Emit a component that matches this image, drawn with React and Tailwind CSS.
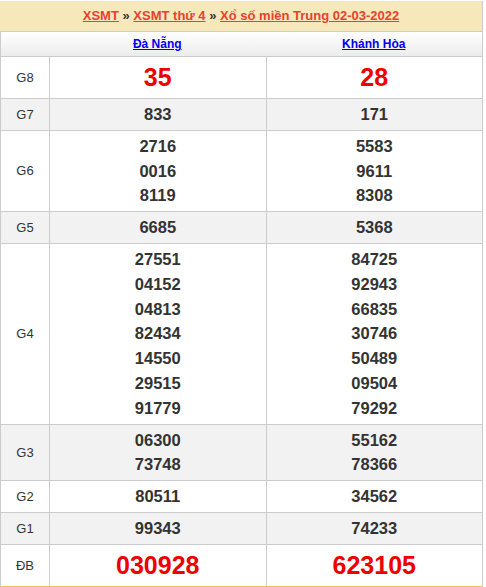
import React from "react";

const rows = [
    { label: "G8", a: ["35"], b: ["28"], big: true },
    { label: "G7", a: ["833"], b: ["171"], alt: true },
    { label: "G6", a: ["2716", "0016", "8119"], b: ["5583", "9611", "8308"] },
    { label: "G5", a: ["6685"], b: ["5368"], alt: true },
    {
        label: "G4",
        a: ["27551", "04152", "04813", "82434", "14550", "29515", "91779"],
        b: ["84725", "92943", "66835", "30746", "50489", "09504", "79292"],
    },
    { label: "G3", a: ["06300", "73748"], b: ["55162", "78366"], alt: true },
    { label: "G2", a: ["80511"], b: ["34562"] },
    { label: "G1", a: ["99343"], b: ["74233"], alt: true },
    { label: "ĐB", a: ["030928"], b: ["623105"], big: true },
];

function Cell({ nums, big }) {
    return (
        <div className={`flex flex-col items-center justify-center border-l border-[#cccccc] ${big ? "py-[6px]" : "py-[3px]"}`}>
            {nums.map((n) => (
                <div
                    key={n}
                    className={
                        big
                            ? "text-[25px] leading-[29px] font-bold text-[#ee0000]"
                            : "text-[16.5px] leading-[24.8px] font-bold text-[#333333]"
                    }
                >
                    {n}
                </div>
            ))}
        </div>
    );
}

export default function App() {
    return (
        <div className="w-[483px] bg-white font-['Liberation_Sans',Arial,sans-serif]">
            {/* Title bar */}
            <div className="mt-px h-[30px] bg-[#f7e8bc] flex items-center justify-center border-r border-[#cccccc]">
                <div className="text-[13px] font-bold text-[#e8412c]">
                    <a href="#" className="underline">XSMT</a>
                    <span className="text-[#333333]"> » </span>
                    <a href="#" className="underline">XSMT thứ 4</a>
                    <span className="text-[#333333]"> » </span>
                    <a href="#" className="underline">Xổ số miền Trung 02-03-2022</a>
                </div>
            </div>

            <div className="border-l border-r border-t border-[#cccccc] border-b-[2px] border-b-[#f5c242]">
                {/* Province header */}
                <div className="grid grid-cols-[48px_1fr_1fr] h-[25px] border-b border-[#cccccc] bg-gradient-to-b from-white to-[#ececec]">
                    <div />
                    <div className="flex items-center justify-center">
                        <a href="#" className="text-[12px] font-bold text-[#0000ee] underline">Đà Nẵng</a>
                    </div>
                    <div className="flex items-center justify-center">
                        <a href="#" className="text-[12px] font-bold text-[#0000ee] underline">Khánh Hòa</a>
                    </div>
                </div>

                {rows.map((r, i) => (
                    <div
                        key={r.label}
                        className={`grid grid-cols-[48px_1fr_1fr] ${i < rows.length - 1 ? "border-b border-[#cccccc]" : ""} ${r.alt ? "bg-[#f2f2f2]" : "bg-white"}`}
                    >
                        <div className="flex items-center justify-center text-[13px] text-[#333333]">{r.label}</div>
                        <Cell nums={r.a} big={r.big} />
                        <Cell nums={r.b} big={r.big} />
                    </div>
                ))}
            </div>
        </div>
    );
}
